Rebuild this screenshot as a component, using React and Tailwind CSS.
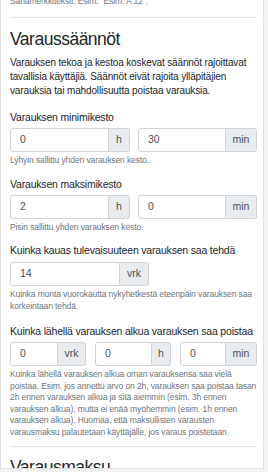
export default function App() {
  const font = { fontFamily: '"Liberation Sans", Arial, sans-serif' };
  const Group = ({ value, unit, w, addonW }) => (
    <div className="flex h-[24px]" style={{ width: w }}>
      <div className="flex-1 flex items-center pl-[9px] border border-[#ced4da] rounded-l-[3px] bg-white text-[10.5px] text-[#495057]">
        {value}
      </div>
      <div
        className="flex items-center justify-center border border-l-0 border-[#ced4da] rounded-r-[3px] bg-[#e9ecef] text-[10.5px] text-[#495057]"
        style={{ width: addonW }}
      >
        {unit}
      </div>
    </div>
  );
  const help = "text-[8.5px] leading-[11.5px] tracking-[-0.1px] text-[#6c757d]";
  const label = "text-[10.5px] leading-[14px] tracking-[-0.19px]";
  return (
    <div className="w-[268px] h-[472px] bg-[#f2f2f2] overflow-hidden" style={font}>
      <div className="w-[264px] h-[469px] bg-white border-l border-r border-b border-[#e0e0e0] overflow-hidden pl-[9px] pr-[6px] text-[#212529]">
        <div className={"mt-[-4px] " + help}>
          Sanamerkkiteksti. Esim. "Esim. A 12".
        </div>
        <div className="mt-[9px] border-t border-[#e5e5e5]" />
        <h2 className="mt-[10px] text-[17.5px] leading-[22px] tracking-[-0.5px] font-normal">Varaussäännöt</h2>
        <p className="mt-[6px] text-[10px] leading-[14.2px] tracking-[-0.14px]">
          Varauksen tekoa ja kestoa koskevat säännöt rajoittavat tavallisia käyttäjiä. Säännöt eivät rajoita ylläpitäjien varauksia tai mahdollisuutta poistaa varauksia.
        </p>
        <div className={"mt-[12px] " + label}>Varauksen minimikesto</div>
        <div className="mt-[4px] flex gap-[8px]">
          <Group value="0" unit="h" w={120} addonW={21} />
          <Group value="30" unit="min" w={119} addonW={31} />
        </div>
        <div className={"mt-[3px] " + help}>Lyhyin sallittu yhden varauksen kesto.</div>
        <div className={"mt-[10px] " + label}>Varauksen maksimikesto</div>
        <div className="mt-[4px] flex gap-[8px]">
          <Group value="2" unit="h" w={120} addonW={21} />
          <Group value="0" unit="min" w={119} addonW={31} />
        </div>
        <div className={"mt-[3px] " + help}>Pisin sallittu yhden varauksen kesto.</div>
        <div className={"mt-[10px] " + label}>Kuinka kauas tulevaisuuteen varauksen saa tehdä</div>
        <div className="mt-[5px] flex">
          <Group value="14" unit="vrk" w={139} addonW={29} />
        </div>
        <div className={"mt-[3px] " + help}>
          Kuinka monta vuorokautta nykyhetkestä eteenpäin varauksen saa korkeintaan tehdä.
        </div>
        <div className={"mt-[12px] whitespace-nowrap " + label}>Kuinka lähellä varauksen alkua varauksen saa poistaa</div>
        <div className="mt-[4px] flex gap-[9px]">
          <Group value="0" unit="vrk" w={76} addonW={28} />
          <Group value="0" unit="h" w={76} addonW={19} />
          <Group value="0" unit="min" w={77} addonW={31} />
        </div>
        <div className={"mt-[3px] " + help}>
          Kuinka lähellä varauksen alkua oman varauksensa saa vielä poistaa. Esim. jos annettu arvo on 2h, varauksen saa poistaa tasan 2h ennen varauksen alkua ja sitä aiemmin (esim. 3h ennen varauksen alkua), mutta ei enää myöhemmin (esim. 1h ennen varauksen alkua). Huomaa, että maksullisten varausten varausmaksu palautetaan käyttäjälle, jos varaus poistetaan.
        </div>
        <div className="mt-[8px] border-t border-[#e5e5e5]" />
        <h2 className="mt-[9px] text-[17.5px] leading-[22px] tracking-[-0.5px] font-normal">Varausmaksu</h2>
      </div>
    </div>
  );
}
